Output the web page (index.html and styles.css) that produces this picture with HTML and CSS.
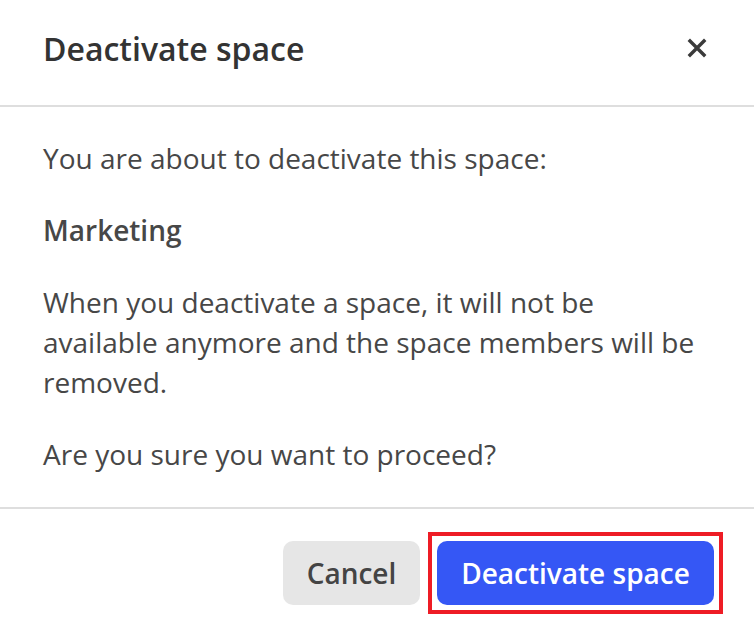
FILE: index.html
```html
<!DOCTYPE html>
<html lang="en">
<head>
<meta charset="utf-8">
<title>Deactivate space</title>
<link rel="stylesheet" href="styles.css">
</head>
<body>
<div class="dialog">
  <header class="dialog-header">
    <h1 class="dialog-title">Deactivate space</h1>
    <button class="close-btn" aria-label="Close">
      <svg width="20" height="20" viewBox="0 0 20 20"><path d="M3 3 L17 17 M17 3 L3 17" stroke="#3a3a3a" stroke-width="3.4" stroke-linecap="square"/></svg>
    </button>
  </header>
  <section class="dialog-body">
    <p>You are about to deactivate this space:</p>
    <p class="space-name">Marketing</p>
    <p>When you deactivate a space, it will not be available anymore and the space members will be removed.</p>
    <p>Are you sure you want to proceed?</p>
  </section>
  <footer class="dialog-footer">
    <button class="btn btn-secondary">Cancel</button>
    <div class="highlight">
      <button class="btn btn-primary">Deactivate space</button>
    </div>
  </footer>
</div>
</body>
</html>
```
FILE: styles.css
```css
* { box-sizing: border-box; }
html, body { margin: 0; padding: 0; background: #fff; }
body { font-family: "Open Sans", "Noto Sans", sans-serif; color: #444; }
.dialog { width: 754px; height: 631px; display: flex; flex-direction: column; }
.dialog-header {
  height: 107px;
  display: flex; align-items: center; justify-content: space-between;
  padding: 0 47px 0 43px;
  border-bottom: 2px solid #dedede;
}
.dialog-title { margin: 0; font-size: 32px; font-weight: 600; color: #333; padding-bottom: 8px; }
.close-btn { background: none; border: 0; padding: 0; width: 20px; height: 20px; margin-bottom: 10px; cursor: pointer; }
.close-btn svg { display: block; }
.dialog-body { padding: 31px 43px 0; height: 400px; }
.dialog-body p { margin: 0 0 32px; font-size: 28px; line-height: 40px; color: #474747; }
.dialog-body .space-name { font-weight: 600; }
.dialog-footer {
  border-top: 2px solid #dedede;
  display: flex; justify-content: flex-end; align-items: center;
  padding: 6px 31px 0 0; gap: 8px;
  flex: 1;
}
.highlight { border: 4px solid #ee1c25; padding: 5px; }
.btn {
  display: block;
  height: 64px; border: 0; border-radius: 10px;
  font-family: "Open Sans", "Noto Sans", sans-serif; font-size: 28px; font-weight: 600;
  padding: 0; cursor: pointer;
}
.btn-secondary { background: #e6e6e6; color: #444; width: 137px; }
.btn-primary { background: #3557f5; color: #fff; width: 277px; }
```
